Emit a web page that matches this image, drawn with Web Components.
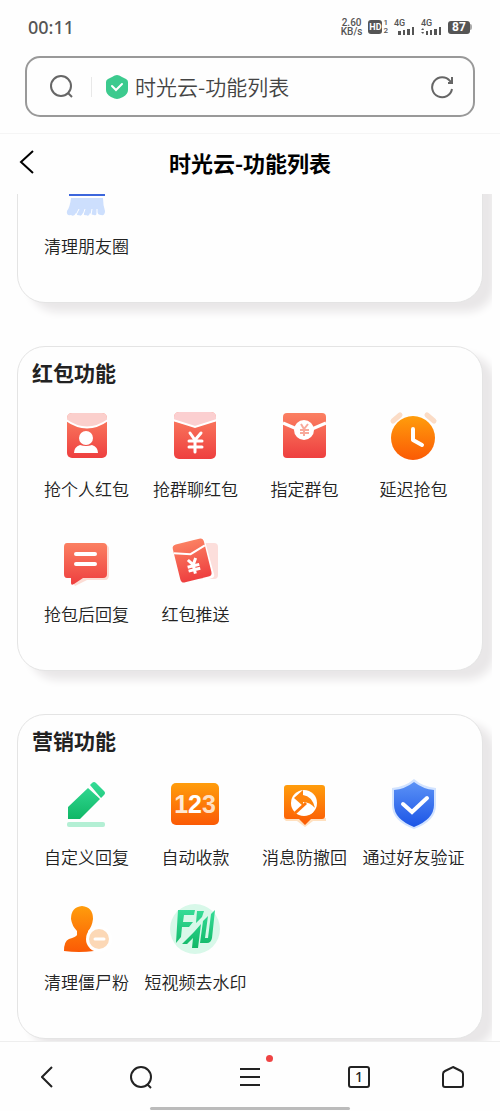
<!DOCTYPE html>
<html lang="zh-CN">
<head>
<meta charset="utf-8">
<meta name="viewport" content="width=device-width, initial-scale=1">
<title>时光云-功能列表</title>
<style>
  body {
    margin: 0;
    height: 100vh;
    display: flex;
    flex-direction: column;
    background: #fefefe;
    color: #222;
    font-family: "Noto Sans CJK SC", sans-serif;
  }
  .defs { display: block; }
  feature-tile svg { display: block; width: 50px; height: 50px; margin-right: 2px; overflow: visible; }
</style>
</head>
<body>
<svg class="defs" width="0" height="0" aria-hidden="true">
  <defs>
    <linearGradient id="red" x1="0" y1="0" x2="0" y2="1"><stop offset="0" stop-color="#fb8062"/><stop offset="1" stop-color="#ee3f3f"/></linearGradient>
    <linearGradient id="orange" x1="0" y1="0" x2="0" y2="1"><stop offset="0" stop-color="#ff9d0c"/><stop offset="1" stop-color="#fb5a05"/></linearGradient>
    <linearGradient id="green" x1="0" y1="0" x2="0" y2="1"><stop offset="0" stop-color="#35dc97"/><stop offset="1" stop-color="#10b766"/></linearGradient>
    <linearGradient id="blue" x1="0" y1="0" x2="0" y2="1"><stop offset="0" stop-color="#5b92f6"/><stop offset="1" stop-color="#1c55e6"/></linearGradient>
  </defs>
</svg>

<status-bar></status-bar>
<address-bar value="时光云-功能列表"></address-bar>
<page-header>时光云-功能列表</page-header>

<feature-list>
  <feature-section>
    <feature-tile label="清理朋友圈">
      <svg viewBox="0 0 50 50"><path d="M8 24h36v3H8z" fill="#3c66dc"/><path d="M10 29h32q0 7 2 13 0 5-4 4-3 0-4-3 0 4-3 3-3 0-4-2-1 4-4 2-2 1-3-2-2 4-4 2-2 1-3-2-2 4-5 2-5 1-4-4 3-4 4-13z" fill="#cddffd"/><path d="M15 46l3-6M22 46l2-6M30 46l1-6M36 46v-6" stroke="#fff" stroke-width="1"/></svg>
    </feature-tile>
  </feature-section>

  <feature-section heading="红包功能">
    <feature-tile label="抢个人红包">
      <svg viewBox="0 0 50 50"><rect x="6" y="1" width="40" height="45" rx="5" fill="url(#red)"/><path d="M6 9V6q0-5 5-5h30q5 0 5 5v3Q26 22 6 9z" fill="#fbcfcc"/><path d="M5 8Q26 23 47 8" fill="none" stroke="#fff" stroke-width="2"/><circle cx="25" cy="26" r="7" fill="#fff"/><path d="M13 41q0-6 6-8 6 2 12 0 6 2 6 8z" fill="#fff"/></svg>
    </feature-tile>
    <feature-tile label="抢群聊红包">
      <svg viewBox="0 0 50 50"><rect x="4" y="0" width="42" height="47" rx="5" fill="url(#red)"/><path d="M4 9V5q0-5 5-5h32q5 0 5 5v4l-21 6z" fill="#fbcfd0"/><path d="M3 8l22 7 22-7" fill="none" stroke="#fff" stroke-width="2"/><path d="M20 21l5 7 6-7M25 29v11M19 29h13M19 35h13" fill="none" stroke="#fff" stroke-width="3" stroke-linecap="round"/></svg>
    </feature-tile>
    <feature-tile label="指定群包">
      <svg viewBox="0 0 50 50"><rect x="4" y="1" width="43" height="45" rx="4" fill="url(#red)"/><path d="M4 11l14 6M47 11l-14 6" stroke="#fff" stroke-width="3"/><circle cx="25" cy="18" r="10" fill="#fff"/><path d="M22 12l3 5 4-5M25 17v7M21 18h9M21 21h9" fill="none" stroke="#f8a99b" stroke-width="2"/></svg>
    </feature-tile>
    <feature-tile label="延迟抢包">
      <svg viewBox="0 0 50 50"><path d="M5 9l7-6M39 3l7 6" stroke="#fbdcc6" stroke-width="5" stroke-linecap="round"/><circle cx="25" cy="26" r="23" fill="#fff"/><circle cx="25" cy="26" r="22" fill="url(#orange)"/><path d="M25 17v11l9 5" fill="none" stroke="#fff" stroke-width="4" stroke-linecap="round" stroke-linejoin="round"/></svg>
    </feature-tile>
    <feature-tile label="抢包后回复">
      <svg viewBox="0 0 50 50"><path d="M8 8h36q4 0 4 4v26q0 5-4 5H26l-12 6-4-6z" fill="#fcdcd4"/><path d="M6 6h36q4 0 4 4v27q0 4-4 4H22l-9 6q-3 2-3-1v-5H6q-3 0-3-4V10q0-4 3-4z" fill="url(#red)"/><path d="M15 17h19M15 27h19" stroke="#fff" stroke-width="4" stroke-linecap="round"/></svg>
    </feature-tile>
    <feature-tile label="红包推送">
      <svg viewBox="0 0 50 50"><rect x="24" y="6" width="24" height="36" rx="4" fill="#fcdedb"/><path d="M31 2q3-1 4 2l9 33q1 3-2 4l-9 3z" fill="#fff"/><g transform="rotate(-14 22 23)"><rect x="6" y="4" width="32" height="39" rx="4" fill="url(#red)"/><path d="M6 12l16 5 16-5" fill="none" stroke="#fff" stroke-width="2"/><path d="M18 22l4 6 4-6M22 28v9M16 29h12M16 33h12" fill="none" stroke="#fff" stroke-width="3"/></g></svg>
    </feature-tile>
  </feature-section>

  <feature-section heading="营销功能">
    <feature-tile label="自定义回复">
      <svg viewBox="0 0 50 50"><path d="M7 27L27 8l12 11-20 20H7zM29 5l2-2q2-2 4 0l8 8q2 2 0 4l-3 3z" fill="url(#green)"/><rect x="6" y="42" width="38" height="5" rx="2" fill="#b3efd4"/></svg>
    </feature-tile>
    <feature-tile label="自动收款">
      <svg viewBox="0 0 50 50"><rect x="1" y="3" width="48" height="42" rx="5" fill="url(#orange)"/><text x="25" y="33" text-anchor="middle" font-family="Liberation Sans, sans-serif" font-size="25" font-weight="700" fill="#fff"><tspan fill="#ffe9d2">1</tspan><tspan>2</tspan><tspan fill="#ffdfc0">3</tspan></text></svg>
    </feature-tile>
    <feature-tile label="消息防撤回">
      <svg viewBox="0 0 50 50"><path d="M4 38h43v3H34l-8 6-8-6H7z" fill="#ffe0bf"/><path d="M8 5h35q3 0 3 3v28q0 3-3 3H32l-6 6-6-6H8q-3 0-3-3V8q0-3 3-3z" fill="url(#orange)"/><circle cx="25" cy="23" r="13" fill="#fff"/><path d="M15 18l9-8v5q9 1 12 13-5-6-12-6v4z" fill="#ff850c"/><path d="M15 34l12-11" stroke="#ff750a" stroke-width="3"/><path d="M36 28q-2 6-8 7l3-10z" fill="#fff"/></svg>
    </feature-tile>
    <feature-tile label="通过好友验证">
      <svg viewBox="0 0 50 50"><path d="M26-1q9 8 22 9v17q0 16-22 24Q4 41 4 25V8Q17 7 26-1z" fill="#d2e3ff"/><path d="M26 2q9 7 20 8v15q0 14-20 22Q6 39 6 25V10q11-1 20-8z" fill="url(#blue)"/><path d="M15 24l9 8 15-14" fill="none" stroke="#fff" stroke-width="4" stroke-linecap="round"/></svg>
    </feature-tile>
    <feature-tile label="清理僵尸粉">
      <svg viewBox="0 0 50 50"><path d="M21 1q11 1 11 13-1 8-5 12v4q3 2 10 4l-4 12q-15 2-30 0 0-10 5-12 7-2 8-4v-4q-5-5-6-12Q10 2 21 1z" fill="url(#orange)"/><circle cx="38" cy="34" r="13" fill="#fff"/><circle cx="38" cy="34" r="10" fill="#fcd8b6"/><path d="M34 34h9" stroke="#fff" stroke-width="3" stroke-linecap="round"/></svg>
    </feature-tile>
    <feature-tile label="短视频去水印">
      <svg viewBox="0 0 50 50"><circle cx="25" cy="24" r="25" fill="#d8f8e9"/><path d="M8 5h17l-1 5H14l-1 7h10l-4 5h-7l-1 10-5 6zM27 6h7l-2 6-6 6zM12 39l12-12 7-8-3 24h-6l1-10-6 6zM33 16l5-5-3 22h3l3-24 4-4-3 28q-1 5-5 5h-7z" fill="url(#green)"/></svg>
    </feature-tile>
  </feature-section>
</feature-list>

<browser-nav></browser-nav>

<script>
  class BaseElement extends HTMLElement {
    constructor() {
      super();
      this.attachShadow({ mode: 'open' });
    }
    connectedCallback() {
      this.shadowRoot.innerHTML = this.render();
    }
  }

  customElements.define('status-bar', class extends BaseElement {
    render() {
      return `<style>
        :host { display: flex; align-items: center; justify-content: space-between; height: 56px; box-sizing: border-box; padding: 0 28px 2px; color: #555; font-family: Roboto, sans-serif; font-weight: 500; flex: none; }
        time { font-family: "Noto Sans", sans-serif; font-size: 18px; line-height: 24px; }
        .right { display: flex; align-items: center; gap: 6px; }
        .stack { display: grid; font-size: 10px; line-height: 9px; text-align: center; }
        .hd { display: flex; align-items: center; gap: 1px; }
        .badge { background: #555; color: #fff; border-radius: 3px; font-size: 9px; line-height: 14px; width: 14px; text-align: center; font-weight: 700; }
        .sim { font-size: 8px; line-height: 8px; display: grid; }
        .signal { display: grid; font-size: 9px; line-height: 8px; }
        .signal svg { display: block; margin-left: 4px; width: 17px; height: 8px; overflow: visible; }
        .battery { display: flex; align-items: center; }
        .level { background: #555; color: #fff; border-radius: 3px; width: 22px; font-size: 12px; line-height: 13px; font-weight: 700; text-align: center; }
        .cap { width: 2px; height: 6px; background: #aaa; border-radius: 0 2px 2px 0; }
      </style>
      <time>00:11</time>
      <div class="right">
        <div class="stack"><span>2.60</span><span>KB/s</span></div>
        <div class="hd"><span class="badge">HD</span><span class="sim"><span>1</span><span>2</span></span></div>
        <div class="signal"><span>4G</span><svg viewBox="0 0 17 8"><path d="M0 4h3v4H0zM5 3h2v5H5zM9 2h3v6H9zM14 0h2v8h-2z" fill="#555"/></svg></div>
        <div class="signal"><span>4G</span><svg viewBox="0 0 17 8"><path d="M-4 3h3l-1-2zM-4 5h3l-1 2zM1 4h2v4H1zM5 3h2v5H5zM9 2h3v6H9zM14 0h2v8h-2z" fill="#555"/></svg></div>
        <div class="battery"><span class="level">87</span><span class="cap"></span></div>
      </div>`;
    }
  });

  customElements.define('address-bar', class extends BaseElement {
    render() {
      return `<style>
        :host { display: block; flex: none; padding: 0 25px 16px; border-bottom: 1px solid #f5f5f5; }
        form { display: flex; align-items: center; height: 61px; box-sizing: border-box; border: 2px solid #999; border-radius: 15px; padding: 0 19px 0 22px; }
        svg { display: block; flex: none; }
        .rule { width: 1px; height: 20px; background: #e8e8e8; margin: 0 14px 0 18px; flex: none; }
        input { flex: 1; min-width: 0; border: 0; outline: 0; background: none; padding: 0 0 2px; margin-left: 7px; font: 350 21px/32px "Noto Sans CJK SC", sans-serif; color: #444; }
        button { border: 0; background: none; padding: 0; }
      </style>
      <form>
        <svg width="24" height="24" viewBox="0 0 24 24" fill="none" stroke="#666" stroke-width="2"><circle cx="12" cy="11" r="10"/><path d="M19 18l4 4"/></svg>
        <span class="rule"></span>
        <svg width="22" height="24" viewBox="0 0 22 24"><path d="M11 0q2 0 5 2l4 2q2 1 2 3v8q0 4-5 7-4 2-6 2t-6-2q-5-3-5-7V7q0-2 2-3l4-2q3-2 5-2z" fill="#3cca8e"/><path d="M6 11l4 4 6-6" fill="none" stroke="#fff" stroke-width="2" stroke-linecap="round"/></svg>
        <input type="text" aria-label="网址" value="${this.getAttribute('value')}">
        <button type="button" aria-label="刷新"><svg width="24" height="24" viewBox="0 0 24 24" fill="none" stroke="#666" stroke-width="2"><path d="M22 14a10 10 0 1 1-2-8l2 2M22 2v6h-4"/></svg></button>
      </form>`;
    }
  });

  customElements.define('page-header', class extends BaseElement {
    render() {
      return `<style>
        :host { display: grid; grid-template-columns: 40px 1fr 40px; align-items: center; height: 60px; box-sizing: border-box; padding: 0 12px 4px; flex: none; color: #000; }
        h1 { margin: 0; font-size: 22px; line-height: 32px; font-weight: 700; text-align: center; }
        button { border: 0; background: none; padding: 0 0 0 7px; justify-self: start; }
        svg { display: block; }
      </style>
      <button type="button" aria-label="返回"><svg width="15" height="24" viewBox="0 0 15 24" fill="none" stroke="#000" stroke-width="2"><path d="M14 1L2 12l12 11"/></svg></button>
      <h1><slot></slot></h1>`;
    }
  });

  customElements.define('feature-list', class extends BaseElement {
    render() {
      return `<style>
        :host { display: block; flex: 1; min-height: 0; overflow: hidden; margin: 0 8px; }
        /* The list is shown scrolled part of the way down its first section. */
        main { display: grid; gap: 43px; padding: 0 9px; margin-top: -91px; }
      </style>
      <main><slot></slot></main>`;
    }
  });

  customElements.define('feature-section', class extends BaseElement {
    render() {
      const heading = this.getAttribute('heading') || '';
      return `<style>
        :host { display: block; background: #fefefe; border: 1px solid #e4e4e4; border-radius: 28px; padding: 11px 14px 34px; box-shadow: 12px 9px 8px #e9e7e8; }
        h2 { margin: 0; height: 28px; font-size: 21px; line-height: 28px; font-weight: 700; }
        .grid { display: grid; grid-template-columns: repeat(4, 1fr); }
      </style>
      <section><h2>${heading}</h2><div class="grid"><slot></slot></div></section>`;
    }
  });

  customElements.define('feature-tile', class extends BaseElement {
    render() {
      return `<style>
        :host { display: block; min-width: 0; }
        a { display: flex; flex-direction: column; align-items: center; gap: 15px; padding: 26px 0 10px; color: inherit; text-decoration: none; }
        span { font-size: 17px; line-height: 24px; font-weight: 350; white-space: nowrap; }
      </style>
      <a href="#"><slot></slot><span>${this.getAttribute('label')}</span></a>`;
    }
  });

  customElements.define('browser-nav', class extends BaseElement {
    render() {
      return `<style>
        :host { display: block; flex: none; border-top: 1px solid #eee; background: #fefefe; }
        nav { display: grid; grid-template-columns: 40fr 54fr 55fr 54fr 40fr; padding: 22px 7px 18px; }
        button { border: 0; background: none; padding: 0; display: grid; place-items: center; height: 25px; color: #222; }
        svg { display: block; fill: none; stroke: #222; stroke-width: 2; }
        .menu { position: relative; justify-self: center; }
        .dot { position: absolute; right: -13px; top: -9px; width: 7px; height: 7px; border-radius: 50%; background: #ef4444; }
        .tabs { justify-self: center; width: 22px; height: 22px; align-self: center; box-sizing: border-box; border: 2px solid #222; border-radius: 3px; font: 500 14px/18px "Noto Sans", sans-serif; }
        .handle { width: 40%; height: 3px; border-radius: 2px; background: #bbb; margin: 0 auto 1px; }
      </style>
      <nav>
        <button type="button" aria-label="后退"><svg width="12" height="22" viewBox="0 0 12 22"><path d="M11 1L1 11l10 10"/></svg></button>
        <button type="button" aria-label="搜索"><svg width="24" height="24" viewBox="0 0 24 24"><circle cx="12" cy="12" r="10"/><path d="M18 19l4 4"/></svg></button>
        <button class="menu" type="button" aria-label="菜单"><svg width="20" height="20" viewBox="0 0 20 20"><path d="M0 2h20M0 10h20M0 18h20"/></svg><span class="dot"></span></button>
        <button class="tabs" type="button" aria-label="标签页">1</button>
        <button type="button" aria-label="主页"><svg width="22" height="24" viewBox="0 0 22 24"><path d="M11 2l8 4q2 1 2 3v11q0 2-2 2H3q-2 0-2-2V9q0-2 2-3z"/></svg></button>
      </nav>
      <div class="handle"></div>`;
    }
  });
</script>
</body>
</html>
